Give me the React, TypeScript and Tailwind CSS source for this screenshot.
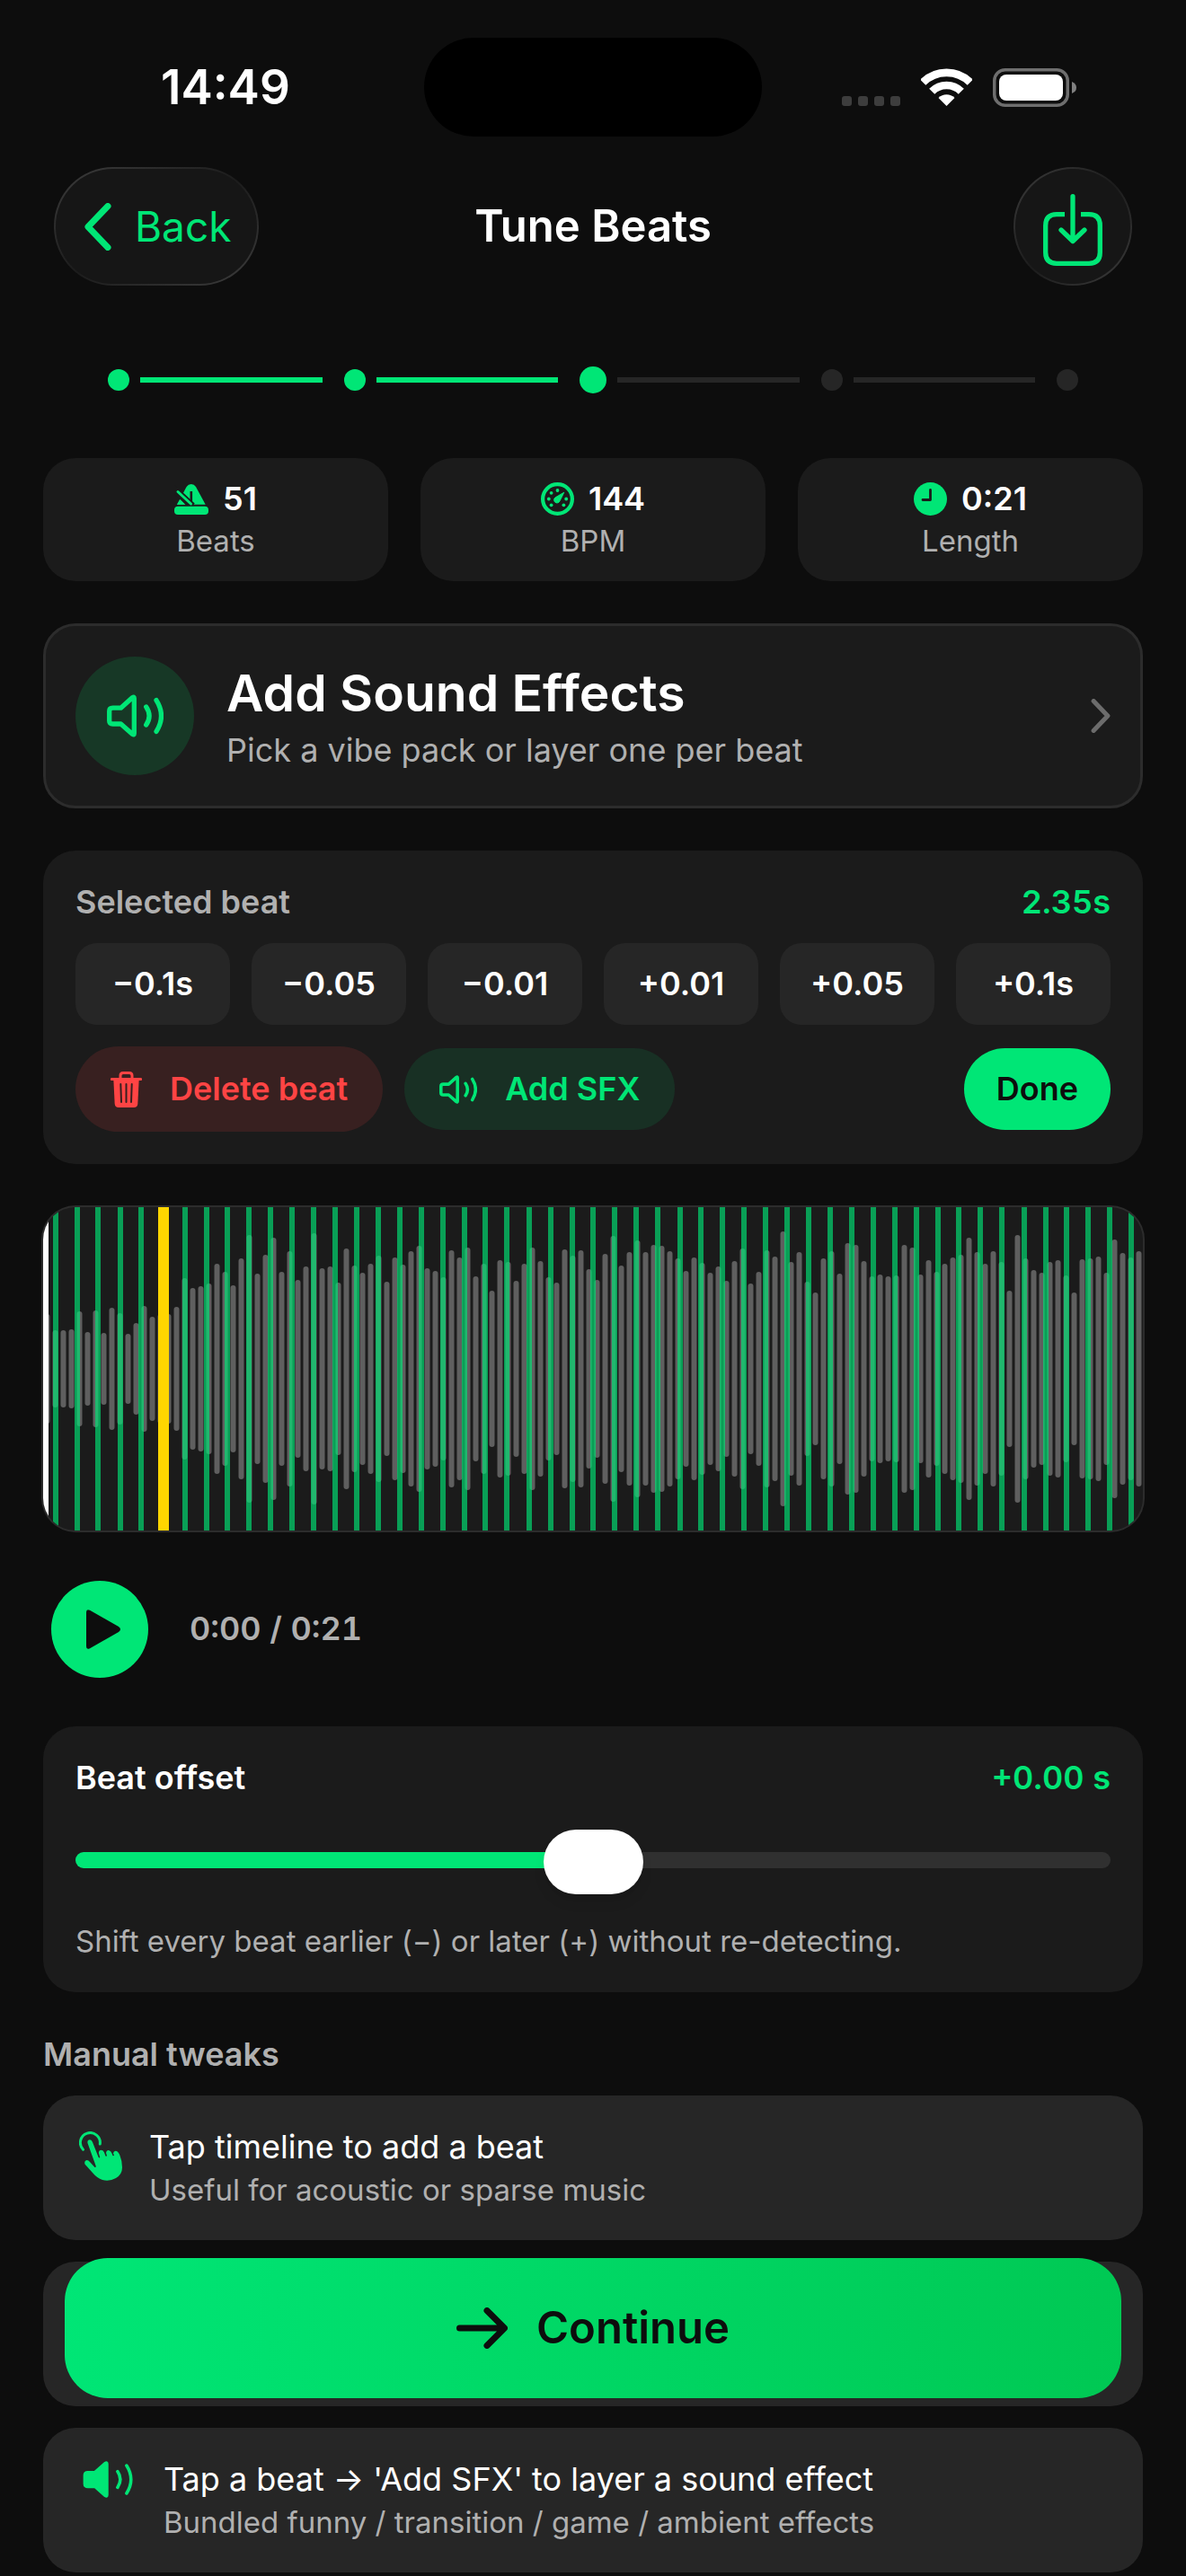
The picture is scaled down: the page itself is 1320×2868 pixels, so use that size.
import React, { useState } from 'react';

interface IconProps {
    className?: string;
}

interface TipProps {
    icon: React.ReactNode;
    title: string;
    subtitle: string;
}

// Half height of every waveform bar, on a 360 high canvas
const PEAKS = [
    61, 43, 43, 44, 64, 41, 65, 40, 68, 62, 39, 51, 70, 58, 61, 61, 69, 101, 90, 92,
    95, 117, 108, 93, 123, 149, 106, 127, 146, 108, 131, 99, 114, 151, 112, 114, 96, 134, 115, 107,
    117, 126, 97, 124, 116, 131, 137, 112, 109, 102, 132, 124, 135, 103, 117, 87, 121, 119, 98, 117,
    135, 120, 102, 96, 133, 126, 132, 111, 99, 128, 148, 115, 130, 143, 130, 138, 137, 131, 123, 109,
    124, 118, 107, 114, 98, 120, 134, 95, 108, 132, 125, 153, 119, 130, 97, 85, 123, 131, 106, 140,
    138, 120, 103, 105, 103, 104, 138, 135, 105, 121, 108, 117, 124, 127, 146, 130, 117, 131, 119, 87,
    149, 123, 110, 107, 119, 121, 104, 85, 122, 123, 125, 107, 144, 129, 124, 131,
];

const BEATS = [
    11, 35, 58, 83, 106, 131, 155, 179, 202, 226, 250, 274, 298, 322, 346, 370, 394,
    418, 442, 466, 489, 513, 538, 562, 586, 609, 633, 657, 681, 706, 729, 753, 777, 801,
    825, 849, 873, 897, 921, 945, 969, 993, 1016, 1040, 1064, 1089, 1113, 1136, 1160, 1184, 1208,
];

const SELECTED_BEAT = 5;

const NUDGES = ['−0.1s', '−0.05', '−0.01', '+0.01', '+0.05', '+0.1s'];

const STEPS = ['done', 'done', 'current', 'todo', 'todo'];

const WifiIcon = () => (
    <svg className="w-[57px] h-[42px]" viewBox="0 0 57 42" fill="none" stroke="#fff">
        <path d="M2.2 15.7a37.2 37.2 0 0 1 52.6 0" strokeWidth="8.8" />
        <path d="M12.2 25.7a23 23 0 0 1 32.6 0" strokeWidth="8.6" />
        <path d="M28.5 42l-9-9a12.8 12.8 0 0 1 18 0z" fill="#fff" stroke="none" />
    </svg>
);

const BatteryIcon = () => (
    <svg className="w-[94px] h-[43px]" viewBox="0 0 94 43" fill="none">
        <rect x="1.75" y="1.75" width="81.5" height="39.5" rx="12" stroke="#6e6e6e" strokeWidth="3.5" />
        <rect x="7" y="7" width="71" height="29" rx="8" fill="#fff" />
        <path d="M88 15q5 2 5 6.500t-5 6.500z" fill="#808080" />
    </svg>
);

const ChevronIcon = ({ className }: IconProps) => (
    <svg className={className} viewBox="0 0 30 53" fill="none" stroke="currentColor" strokeWidth="7" strokeLinecap="round" strokeLinejoin="round">
        <path d="M26 3.500L4 26.500L26 49.500" />
    </svg>
);

const SaveIcon = () => (
    <svg className="w-[66px] h-[80px]" viewBox="0 0 66 80" fill="none" stroke="currentColor" strokeWidth="5.3" strokeLinecap="round" strokeLinejoin="round">
        <path d="M24 22.600H15Q2.700 22.600 2.700 35V65Q2.700 77.300 15 77.300H51Q63.300 77.300 63.300 65V35Q63.300 22.600 51 22.600H42" strokeLinecap="butt" />
        <path d="M33 2.700V52M20 40L33 52.500L46 40" />
    </svg>
);

const MetronomeIcon = () => (
    <svg className="w-[38px] h-[34px]" viewBox="0 0 38 34">
        <path d="M3 22.800L13.600 3Q15.500 0 18.800 0T24 3L34.700 22.800Z" fill="#00e676" />
        <path d="M18.800 8V19" stroke="#1b1b1b" strokeWidth="2.600" />
        <path d="M-2 4L20 24.500" stroke="#1b1b1b" strokeWidth="8" />
        <path d="M4 8.500L18.500 22" stroke="#00e676" strokeWidth="3" strokeLinecap="round" />
        <path d="M3 22.800L6.500 17L12 22.800Z" fill="#00e676" />
        <rect y="24.700" width="38" height="9.300" rx="4" fill="#00e676" />
    </svg>
);

const GaugeIcon = () => (
    <svg className="w-[37px] h-[37px]" viewBox="0 0 37 37" fill="#00e676">
        <circle cx="18.500" cy="18.500" r="16.400" fill="none" stroke="#00e676" strokeWidth="4.200" />
        <circle cx="18.500" cy="9" r="1.900" />
        <circle cx="11.600" cy="11.800" r="1.900" />
        <circle cx="8.800" cy="18.500" r="1.900" />
        <circle cx="11.600" cy="25.300" r="1.900" />
        <circle cx="25.400" cy="25.300" r="1.900" />
        <circle cx="28.200" cy="18.500" r="1.900" />
        <path d="M25.800 11.200L21 20.800A3.300 3.300 0 1 1 16.200 16.800Z" stroke="#00e676" strokeLinejoin="round" />
    </svg>
);

const ClockIcon = () => (
    <svg className="w-[37px] h-[37px]" viewBox="0 0 37 37">
        <circle cx="18.500" cy="18.500" r="18.500" fill="#00e676" />
        <path d="M18.500 8.500V19.500H10" fill="none" stroke="#1b1b1b" strokeWidth="2.800" strokeLinecap="round" strokeLinejoin="round" />
    </svg>
);

const SpeakerIcon = ({ className, filled = false }: IconProps & { filled?: boolean }) => (
    <svg className={className} viewBox="0 0 63 48" fill="none" stroke="currentColor" strokeWidth={filled ? 4 : 5.3} strokeLinecap="round" strokeLinejoin="round">
        <path
            d="M6.500 15.200H15.500L28.500 3.600Q30.300 2.300 30.300 4.500V43.500Q30.300 45.700 28.500 44.400L15.500 33H6.500Q2.700 33 2.700 29.500V18.700Q2.700 15.200 6.500 15.200Z"
            fill={filled ? 'currentColor' : 'none'}
        />
        <path d="M43.700 14Q50.500 24 43.700 34M55 6.600Q66 24 55 41.400" />
    </svg>
);

const TrashIcon = () => (
    <svg className="w-[35px] h-[40px]" viewBox="0 0 35 40" fill="none">
        <path d="M11 8V4.500Q11 1.500 14 1.500H21Q24 1.500 24 4.500V8" stroke="#ff4444" strokeWidth="3" />
        <path d="M1.500 8.500H33.500" stroke="#ff4444" strokeWidth="3.200" strokeLinecap="round" />
        <path d="M3.300 8H31.700L30.300 36Q30 40 26 40H9Q5 40 4.700 36Z" fill="#ff4444" />
        <path d="M11.300 14L12 34M17.500 14V34M23.700 14L23 34" stroke="#382020" strokeWidth="2" strokeLinecap="round" />
    </svg>
);

const TapIcon = () => (
    <svg className="mt-1 w-[48px] h-[55px]" viewBox="0 0 48 55" fill="#00e676">
        <path d="M4.500 20.200A11 11 0 1 1 23.300 14" fill="none" stroke="#00e676" strokeWidth="3" strokeLinecap="round" />
        <path d="M9.500 13Q9 9.500 12 9.300Q14 9.200 15 12L21.500 28.500Q22.500 30 23.300 29L21.800 24Q22 20.800 24.800 20.800Q27 21 28 23.500L29.500 27.500Q30.500 28 31 27L30 24Q30.500 20.800 33 21Q35.500 21.500 36.500 24.500L37.500 27Q38.500 27.500 39 26.500L38 24.500Q38.500 21.500 41 21.800Q44 22.500 45.500 27Q48 33 48 40Q48 48 41 52Q34 56 26 54Q20 52 15 46L6.500 36.500Q5.500 33.500 7.800 32.300Q10 31.500 12 34L17.500 40Q19 40.500 18.700 38.500Z" />
    </svg>
);

const ArrowIcon = () => (
    <svg className="w-[57px] h-[46px]" viewBox="0 0 57 46" fill="none" stroke="currentColor" strokeWidth="7" strokeLinecap="round" strokeLinejoin="round">
        <path d="M3.500 23H53M34 3.500L53.500 23L34 42.500" />
    </svg>
);

const StatusBar = () => (
    <div className="grid grid-cols-[1fr_376px_1fr] items-center pt-[42px]">
        <span className="pl-[179px] text-[53px] leading-[60px] font-semibold">14:49</span>
        <div className="h-[110px] rounded-full bg-black" />
        <div className="flex items-center justify-end pr-[121px]">
            <div className="flex gap-[7px] pt-[31px]">
                {[0, 1, 2, 3].map(i => (
                    <span key={i} className="size-[11px] rounded-[3px] bg-[#3d3d3d]" />
                ))}
            </div>
            <span className="ml-[23px]"><WifiIcon /></span>
            <span className="ml-[23px]"><BatteryIcon /></span>
        </div>
    </div>
);

// Gradient rim: the outer layer shows through a 2px padding
const Glass = ({ label, className, children }: { label?: string; className: string; children: React.ReactNode }) => (
    <button
        aria-label={label}
        className="h-[132px] rounded-full bg-linear-to-br from-[#3d3d3d] via-[#1c1c1c] to-[#3d3d3d] p-[2px] text-[#00e676]"
    >
        <span className={`flex h-full items-center rounded-full bg-[#161616] ${className}`}>{children}</span>
    </button>
);

const NavBar = () => (
    <div className="mt-[34px] grid grid-cols-[1fr_auto_1fr] items-center px-[60px]">
        <div className="flex">
            <Glass className="gap-[26px] pr-[29px] pl-[32px]">
                <ChevronIcon className="w-[30px] h-[53px]" />
                <span className="text-[46px] leading-[60px]">Back</span>
            </Glass>
        </div>
        <h1 className="text-[49px] leading-[60px] font-semibold">Tune Beats</h1>
        <div className="flex justify-end">
            <Glass label="Save" className="w-[128px] justify-center pt-2">
                <SaveIcon />
            </Glass>
        </div>
    </div>
);

const Stepper = () => (
    <div className="mt-[90px] flex h-[30px] items-center px-[120px]">
        {STEPS.map((step, i) => (
            <React.Fragment key={i}>
                {i > 0 && (
                    <span className={`mr-6 ml-3 h-[6px] flex-1 ${i < 3 ? 'bg-[#00e676]' : 'bg-[#262626]'}`} />
                )}
                <span
                    className={`rounded-full ${step === 'todo' ? 'size-6 bg-[#262626]' : step === 'current' ? 'size-[30px] bg-[#00e676]' : 'size-6 bg-[#00e676]'}`}
                />
            </React.Fragment>
        ))}
    </div>
);

const Stat = ({ icon, value, label }: { icon: React.ReactNode; value: string; label: string }) => (
    <div className="flex flex-col items-center gap-1 rounded-[36px] bg-[#1b1b1b] py-6">
        <div className="flex items-center gap-[16px] text-[36px] leading-[43px] font-semibold">
            {icon}
            {value}
        </div>
        <div className="text-[33px] leading-[42px] text-[#b0b0b0]">{label}</div>
    </div>
);

const Tip = ({ icon, title, subtitle }: TipProps) => (
    <li className="flex items-start gap-[30px] rounded-[36px] bg-[#262626] px-10 py-9">
        {icon}
        <div>
            <div className="text-[36px] leading-[43px]">{title}</div>
            <div className="mt-[6px] text-[33px] leading-[40px] text-[#b0b0b0]">{subtitle}</div>
        </div>
    </li>
);

const Waveform = () => (
    <div className="my-px h-[360px] overflow-hidden rounded-[36px] bg-[#1b1b1b] ring-2 ring-[#2c2c2c]">
        <svg className="h-full w-full" viewBox="0 0 1224 360" preserveAspectRatio="none">
            {PEAKS.map((peak, i) => (
                <rect key={i} x={1.5 + i * 9} y={180 - peak} width="6" height={peak * 2} rx="3" fill="#5f5f5f" />
            ))}
            {BEATS.map((x, i) => i !== SELECTED_BEAT && (
                <rect key={i} x={x} y="0" width="6" height="360" fill="#00e676" fillOpacity="0.65" />
            ))}
            <rect x={BEATS[SELECTED_BEAT] - 3} y="0" width="12" height="360" fill="#ffd600" />
            <rect x="0" y="0" width="6" height="360" fill="#fff" />
        </svg>
    </div>
);

const App: React.FC = () => {
    const [offset, setOffset] = useState(0);

    return (
        <div className="min-h-screen bg-[#0d0d0d] pb-1 font-['Inter',sans-serif] text-white">
            <StatusBar />
            <NavBar />
            <Stepper />

            <main className="mt-[72px] flex flex-col gap-[47px] px-12">
                <div className="grid grid-cols-3 gap-9">
                    <Stat icon={<MetronomeIcon />} value="51" label="Beats" />
                    <Stat icon={<GaugeIcon />} value="144" label="BPM" />
                    <Stat icon={<ClockIcon />} value="0:21" label="Length" />
                </div>

                <button className="flex h-[206px] items-center rounded-[36px] border-[3px] border-[#2c2c2c] bg-[#1b1b1b] px-[33px] text-left">
                    <span className="flex size-[132px] items-center justify-center rounded-full bg-[#173826] text-[#00e676]">
                        <SpeakerIcon className="w-[63px] h-[48px]" />
                    </span>
                    <span className="ml-9 flex flex-1 flex-col gap-1">
                        <span className="text-[57px] leading-[72px] font-semibold">Add Sound Effects</span>
                        <span className="text-[36px] leading-[46px] text-[#b0b0b0]">Pick a vibe pack or layer one per beat</span>
                    </span>
                    <ChevronIcon className="w-[22px] h-[38px] rotate-180 text-[#6c6c6c]" />
                </button>

                <section className="flex flex-col gap-6 rounded-[36px] bg-[#1b1b1b] p-9">
                    <div className="flex justify-between text-[36px] leading-[43px] font-semibold">
                        <h2 className="text-[#b0b0b0]">Selected beat</h2>
                        <span className="text-[#00e676] tabular-nums">2.35s</span>
                    </div>
                    <div className="grid grid-cols-6 gap-6">
                        {NUDGES.map(label => (
                            <button key={label} className="h-[91px] rounded-[24px] bg-[#262626] text-[36px] leading-[43px] font-semibold">
                                {label}
                            </button>
                        ))}
                    </div>
                    <div className="flex items-center gap-6 text-[36px] leading-[43px] font-semibold">
                        <button className="flex h-[95px] items-center gap-[31px] rounded-full bg-[#382020] px-[39px] text-[#ff4444]">
                            <TrashIcon />
                            Delete beat
                        </button>
                        <button className="flex h-[91px] items-center gap-[31px] rounded-full bg-[#183024] px-[39px] text-[#00e676]">
                            <SpeakerIcon className="w-[42px] h-[32px]" />
                            Add SFX
                        </button>
                        <button className="ml-auto h-[91px] rounded-full bg-[#00e676] px-9 text-[#0d0d0d]">Done</button>
                    </div>
                </section>

                <Waveform />

                <div className="flex h-[123px] items-center gap-[46px] pl-[9px]">
                    <button aria-label="Play" className="flex size-[108px] items-center justify-center rounded-full bg-[#00e676]">
                        <svg className="ml-2 w-[38px] h-[44px]" viewBox="0 0 38 44" fill="#0d0d0d">
                            <path d="M0 3Q0 -1 4 0.800L36 19Q40 22 36 25L4 43.200Q0 45 0 41Z" />
                        </svg>
                    </button>
                    <span className="text-[36px] leading-[43px] font-semibold text-[#b0b0b0] tabular-nums">0:00 / 0:21</span>
                </div>

                <section className="flex flex-col gap-6 rounded-[36px] bg-[#1b1b1b] p-9">
                    <div className="flex justify-between text-[36px] leading-[43px] font-semibold">
                        <label htmlFor="beat-offset">Beat offset</label>
                        <span className="text-[#00e676] tabular-nums">
                            {offset < 0 ? '−' : '+'}{Math.abs(offset).toFixed(2)} s
                        </span>
                    </div>
                    <input
                        id="beat-offset"
                        type="range"
                        min={-0.5}
                        max={0.5}
                        step={0.01}
                        value={offset}
                        onChange={e => setOffset(Number(e.target.value))}
                        style={{ '--fill': `${(offset + 0.5) * 100}%` } as React.CSSProperties}
                        className="h-[92px] w-full appearance-none bg-transparent [&::-webkit-slider-runnable-track]:h-[18px] [&::-webkit-slider-runnable-track]:rounded-full [&::-webkit-slider-runnable-track]:bg-[linear-gradient(to_right,#00e676_var(--fill),#303030_var(--fill))] [&::-webkit-slider-thumb]:-mt-[25px] [&::-webkit-slider-thumb]:h-[72px] [&::-webkit-slider-thumb]:w-[111px] [&::-webkit-slider-thumb]:appearance-none [&::-webkit-slider-thumb]:rounded-full [&::-webkit-slider-thumb]:bg-white [&::-webkit-slider-thumb]:shadow-lg"
                    />
                    <p className="text-[33px] leading-[41px] text-[#b0b0b0]">
                        Shift every beat earlier (−) or later (+) without re-detecting.
                    </p>
                </section>

                <section>
                    <h2 className="text-[36px] leading-[44px] font-semibold text-[#b0b0b0]">Manual tweaks</h2>
                    <ul className="mt-6 flex flex-col gap-6">
                        <Tip icon={<TapIcon />} title="Tap timeline to add a beat" subtitle="Useful for acoustic or sparse music" />
                        <li className="h-[161px] rounded-[36px] bg-[#262626]" />
                        <Tip
                            icon={<SpeakerIcon filled className="mx-1 w-[56px] h-[43px] text-[#00e676]" />}
                            title="Tap a beat → 'Add SFX' to layer a sound effect"
                            subtitle="Bundled funny / transition / game / ambient effects"
                        />
                    </ul>
                </section>
            </main>

            <button className="fixed inset-x-[72px] bottom-[198px] flex h-[156px] items-center justify-center gap-[32px] rounded-[48px] bg-[linear-gradient(98deg,#00e676,#00c853)] text-[49px] leading-[60px] font-semibold text-[#0d0d0d]">
                <ArrowIcon />
                Continue
            </button>
        </div>
    );
};

export default App;
